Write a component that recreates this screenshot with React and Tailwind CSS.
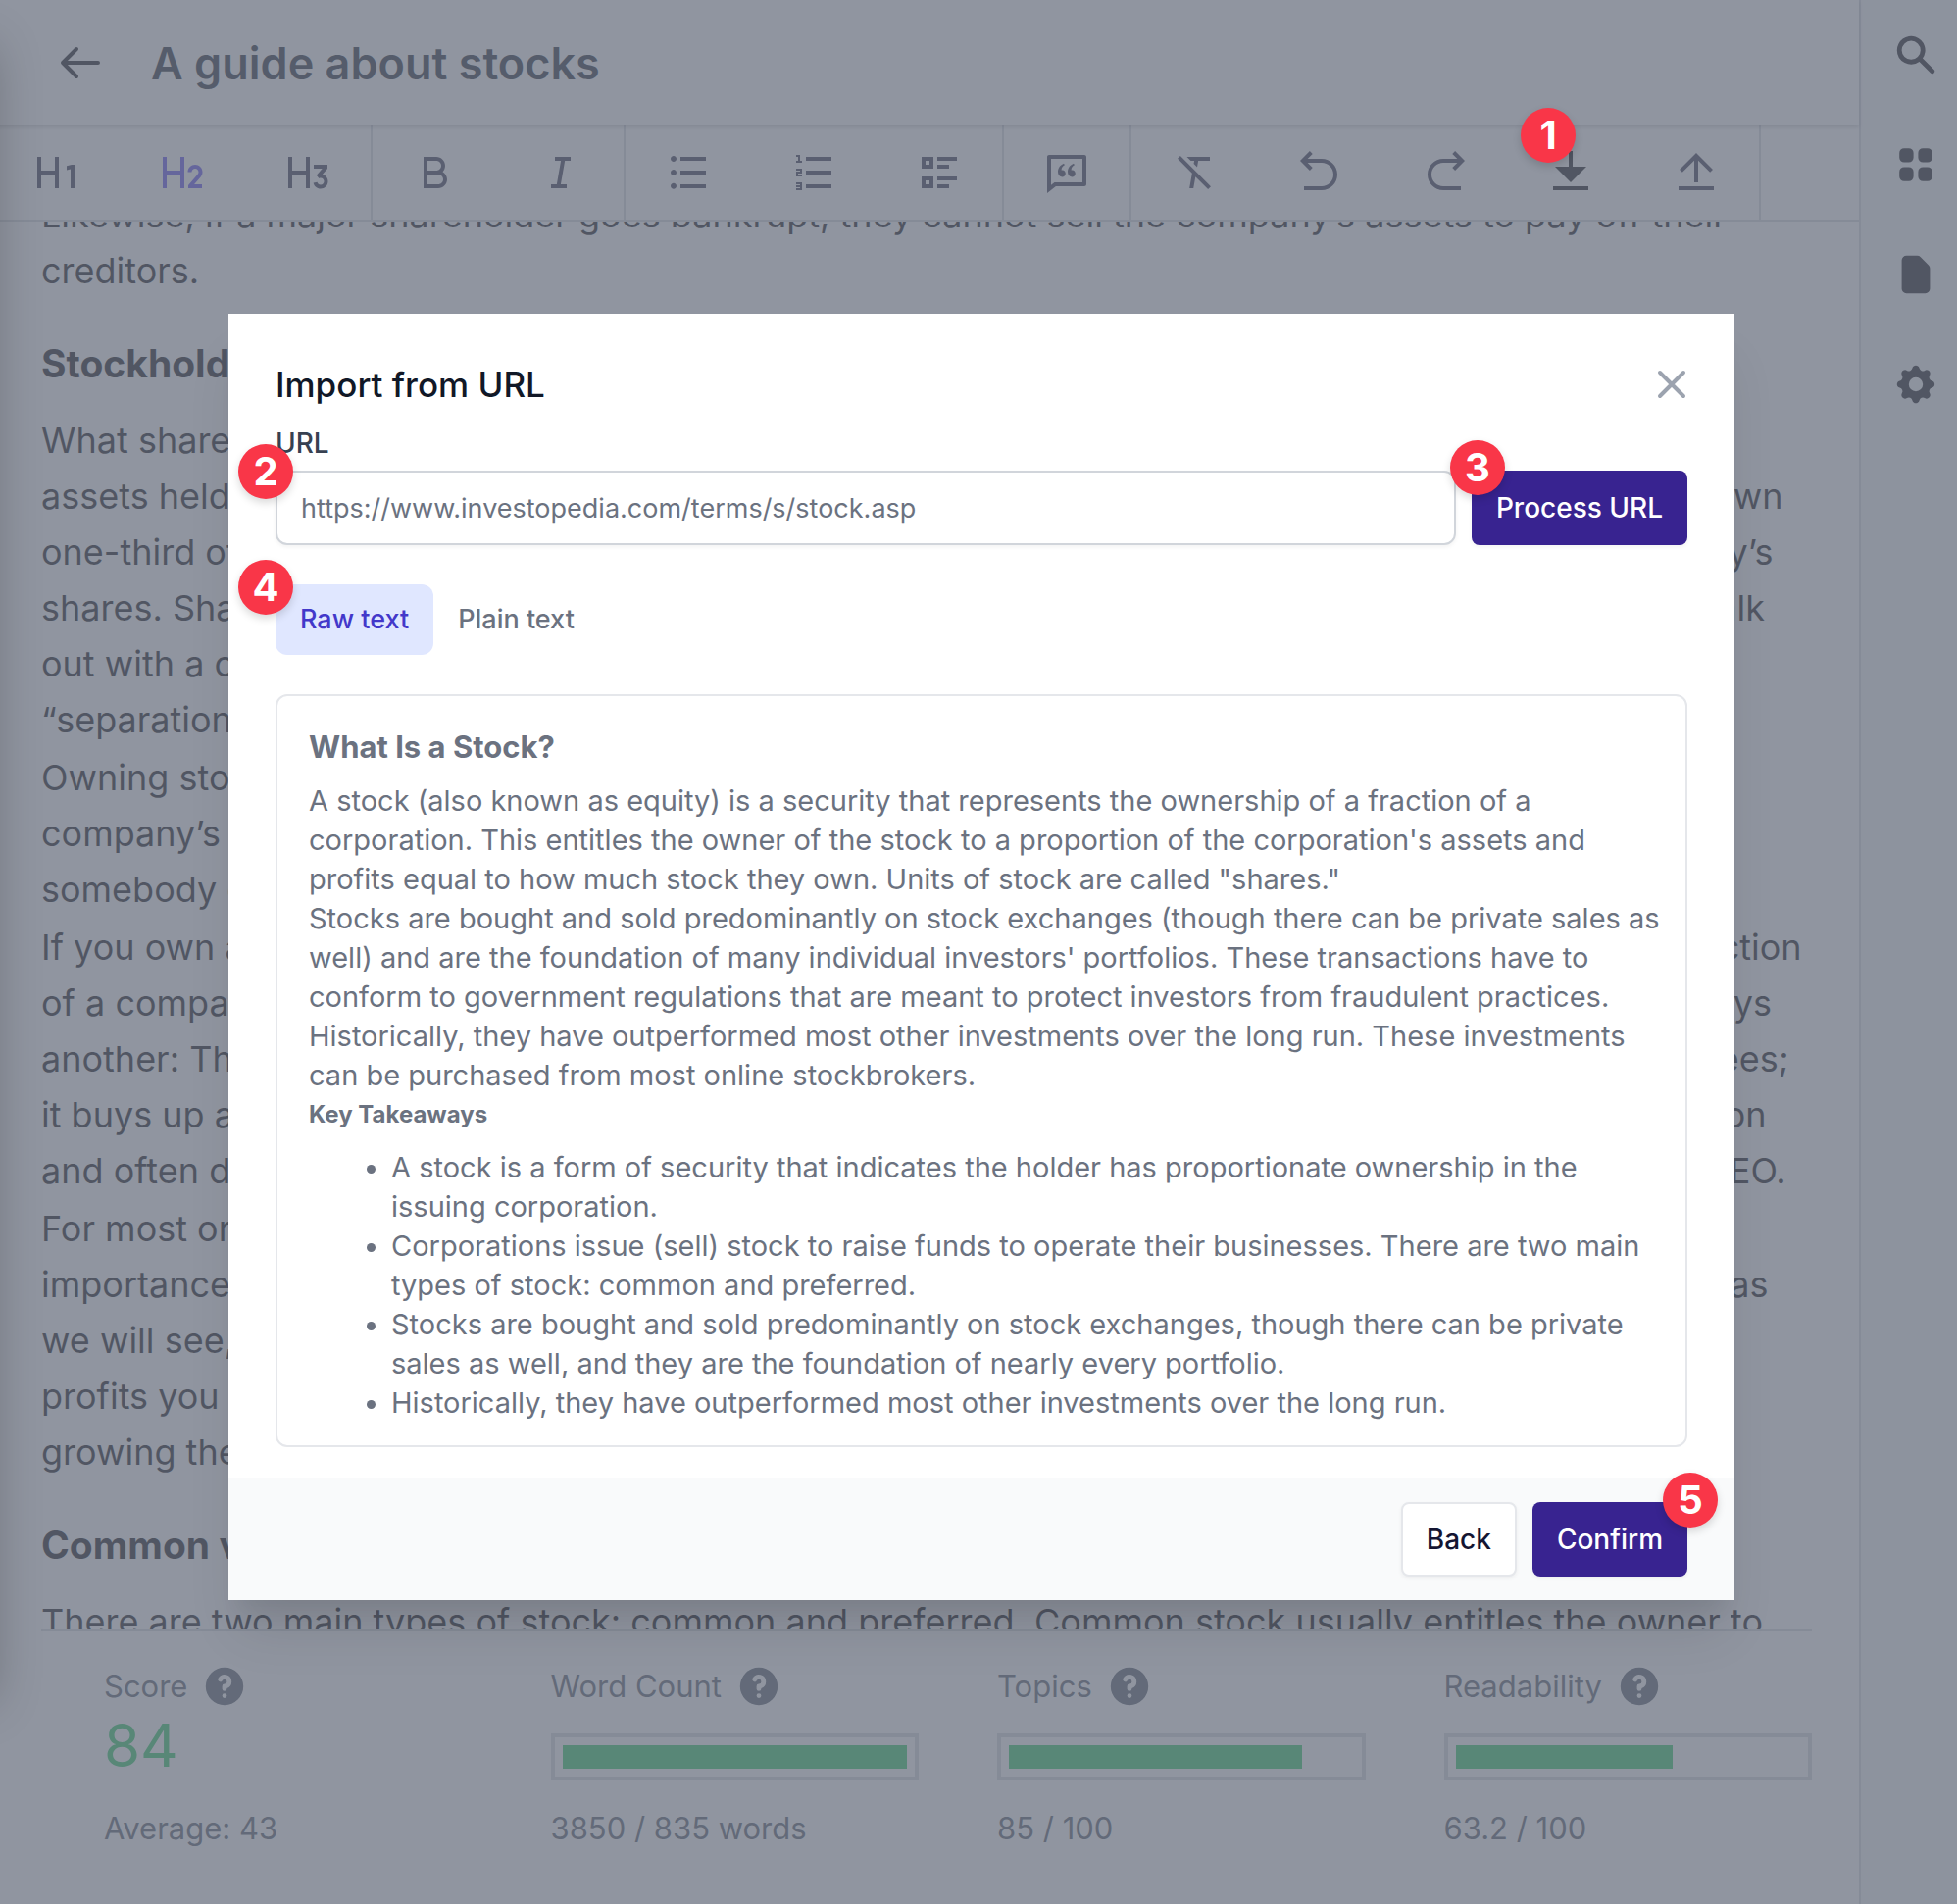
import {
  RiH1, RiH2, RiH3, RiBold, RiItalic, RiListUnordered, RiListOrdered, RiListCheck2,
  RiChatQuoteLine, RiFormatClear, RiArrowGoBackLine, RiArrowGoForwardLine, RiDownloadFill, RiUploadLine,
} from "react-icons/ri";
import {
  HiSearch, HiViewGrid, HiDocument, HiCog, HiQuestionMarkCircle, HiOutlineArrowLeft, HiOutlineX,
} from "react-icons/hi";

const TOOL_GROUPS = [
  [
    { label: "Heading 1", Icon: RiH1 },
    { label: "Heading 2", Icon: RiH2, tone: "text-[#5443f0]" },
    { label: "Heading 3", Icon: RiH3 },
  ],
  [
    { label: "Bold", Icon: RiBold },
    { label: "Italic", Icon: RiItalic },
  ],
  [
    { label: "Bullet list", Icon: RiListUnordered },
    { label: "Numbered list", Icon: RiListOrdered },
    { label: "Check list", Icon: RiListCheck2 },
  ],
  [{ label: "Quote", Icon: RiChatQuoteLine }],
  [
    { label: "Clear formatting", Icon: RiFormatClear },
    { label: "Undo", Icon: RiArrowGoBackLine },
    { label: "Redo", Icon: RiArrowGoForwardLine },
    { label: "Import", Icon: RiDownloadFill, tone: "text-[#05070d]" },
    { label: "Export", Icon: RiUploadLine },
  ],
];

const PARAGRAPHS = [
  [
    "What shareholders actually own are shares issued by the corporation, and the corporation owns the",
    "assets held by a firm. So if you own 33% of the shares of a company it’s incorrect to assert that you own",
    "one-third of the company; it is instead correct to state that you own 100% of one-third of the company’s",
    "shares. Shareholders cannot do as you please with a corporation or its assets. A shareholder can’t walk",
    "out with a chair because the corporation owns that chair, not the shareholder. This is known as the",
    "“separation of ownership and control.”",
  ],
  [
    "Owning stock gives you the right to vote in shareholder meetings, receive dividends (which are the",
    "company’s profits) if and when they are distributed, and it gives you the right to sell your shares to",
    "somebody else.",
  ],
  [
    "If you own a majority of shares, your voting power expands so that you can indirectly control the direction",
    "of a company by appointing its board of directors. This becomes most evident when one company buys",
    "another: The acquiring company doesn’t go round buying up the building, the chairs, and the employees;",
    "it buys up all its shares. The board of directors is responsible for increasing the value of the corporation",
    "and often does so by hiring professional manager, or officer, such as the Chief Executive Officer, or CEO.",
  ],
  [
    "For most ordinary shareholders, not being able to manage the company isn’t such a big deal. The",
    "importance of being a shareholder is that you are entitled to a portion of the company’s profit, which, as",
    "we will see, is the foundation of a stock’s value. The more shares you own, the larger the share of the",
    "profits you get. Many stocks, however, do not pay out dividends and instead reinvest profits back into",
    "growing the company.",
  ],
];

const METRICS = [
  { label: "Score", score: "84", note: "Average: 43" },
  { label: "Word Count", percent: 100, note: "3850 / 835 words" },
  { label: "Topics", percent: 85, note: "85 / 100" },
  { label: "Readability", percent: 63, note: "63.2 / 100" },
];

const SIDE_LINKS = [
  { label: "Search", Icon: HiSearch },
  { label: "Apps", Icon: HiViewGrid },
  { label: "Document", Icon: HiDocument },
  { label: "Settings", Icon: HiCog },
];

function Lines({ lines }) {
  return (
    <p className="mb-0.5 whitespace-nowrap">
      {lines.map((line) => (
        <span key={line} className="block">{line}</span>
      ))}
    </p>
  );
}

function SectionTitle({ children }) {
  return <h2 className="mt-[42px] mb-[26px] text-[39px] leading-[48px] font-bold">{children}</h2>;
}

function Badge({ children, place }) {
  return (
    <span
      className={`absolute z-10 flex size-14 items-center justify-center rounded-full bg-[#f93648] text-[40px] leading-none font-bold text-white shadow-[0_4px_8px_rgba(0,0,0,0.15)] ${place}`}
    >
      {children}
    </span>
  );
}

function Toolbar() {
  return (
    <div role="toolbar" aria-label="Formatting" className="flex shrink-0 border-b-2 border-[#d2d6dc]">
      {TOOL_GROUPS.map((group) => (
        <div key={group[0].label} className="flex border-r-2 border-[#d2d6dc]">
          {group.map(({ label, Icon, tone = "text-[#2a2b45]" }) => (
            <button key={label} type="button" aria-label={label} className={`flex h-24 w-32 items-center justify-center ${tone}`}>
              <Icon className="size-12" />
            </button>
          ))}
        </div>
      ))}
    </div>
  );
}

function Metric({ label, score, percent, note }) {
  return (
    <div>
      <div className="flex h-12 items-center gap-3.5">
        <span>{label}</span>
        <button type="button" aria-label={`About ${label}`}>
          <HiQuestionMarkCircle className="size-12" />
        </button>
      </div>
      <div className="h-24">
        {score ? (
          <div className="text-[60px] leading-[72px] text-[#22c55e]">{score}</div>
        ) : (
          <div className="pt-6">
            <div className="h-12 border-4 border-[#d2d6dc] p-2">
              <div className="h-full bg-[#22c55e]" style={{ width: `${percent}%` }} />
            </div>
          </div>
        )}
      </div>
      <div className="leading-[50px]">{note}</div>
    </div>
  );
}

function Editor() {
  return (
    <div className="flex h-full">
      <main className="-ml-1.5 flex min-w-0 flex-1 flex-col">
        <header className="z-10 flex h-32 shrink-0 items-center gap-12 pl-16 shadow-[0_2px_4px_rgba(0,0,0,0.2)]">
          <button type="button" aria-label="Back to documents" className="text-[#05070d]">
            <HiOutlineArrowLeft className="size-12" />
          </button>
          <h1 className="pt-0.5 text-[45px] leading-[56px] font-semibold text-[#161e2e]">A guide about stocks</h1>
        </header>
        <Toolbar />
        <article className="min-h-0 flex-1 overflow-hidden px-12 text-[36px] leading-[57px] text-[#05070d]">
          <div className="-mt-[35px]">
            <Lines
              lines={[
                "Likewise, if a major shareholder goes bankrupt, they cannot sell the company’s assets to pay off their",
                "creditors.",
              ]}
            />
            <SectionTitle>Stockholders and Equity Ownership</SectionTitle>
            {PARAGRAPHS.map((lines) => (
              <Lines key={lines[0]} lines={lines} />
            ))}
            <SectionTitle>Common vs. Preferred Stock</SectionTitle>
            <Lines
              lines={["There are two main types of stock: common and preferred. Common stock usually entitles the owner to"]}
            />
          </div>
        </article>
        <footer className="mx-12 grid shrink-0 grid-cols-4 gap-20 border-t-2 border-[#d2d6dc] pt-8 pb-[52px] pl-16 text-[31px] text-[#4b5563]">
          {METRICS.map((metric) => (
            <Metric key={metric.label} {...metric} />
          ))}
        </footer>
      </main>
      <nav aria-label="Tools" className="flex w-[100px] shrink-0 flex-col gap-16 border-l-2 border-[#d2d6dc] bg-[#f4f5f7] pt-8 pl-8 text-[#05070d]">
        {SIDE_LINKS.map(({ label, Icon }) => (
          <a key={label} href={`#${label.toLowerCase()}`} aria-label={label}>
            <Icon className="size-12" />
          </a>
        ))}
      </nav>
    </div>
  );
}

function ImportDialog() {
  return (
    <div
      role="dialog"
      aria-labelledby="import-title"
      className="w-full max-w-[1536px] bg-white shadow-[0_40px_50px_-10px_rgba(0,0,0,0.1),0_20px_20px_-10px_rgba(0,0,0,0.06)]"
    >
      <div className="px-12 pt-12 pb-8">
        <div className="flex items-center justify-between">
          <h2 id="import-title" className="text-[35px] leading-[48px] font-medium text-[#111827]">Import from URL</h2>
          <button type="button" aria-label="Close" className="-mr-2 text-[#9ca3af]">
            <HiOutlineX className="size-12" />
          </button>
        </div>

        <label htmlFor="import-url" className="mt-4 block text-[28px] leading-[40px] font-medium text-[#374151]">URL</label>
        <div className="mt-2 flex gap-4">
          <div className="relative flex-1">
            <input
              id="import-url"
              type="text"
              defaultValue="https://www.investopedia.com/terms/s/stock.asp"
              className="h-[76px] w-full rounded-xl border-2 border-[#d1d5db] bg-white px-6 text-[27px] text-[#6b7280] shadow-[0_2px_4px_rgba(0,0,0,0.05)]"
            />
            <Badge place="-left-[38px] -top-[27px]">2</Badge>
          </div>
          <div className="relative">
            <button type="button" className="h-[76px] rounded-lg bg-[#382390] px-[25px] text-[28px] font-medium text-white shadow-[0_2px_4px_rgba(0,0,0,0.05)]">
              Process URL
            </button>
            <Badge place="-left-[22px] -top-[31px]">3</Badge>
          </div>
        </div>

        <div role="tablist" className="mt-10 flex text-[27px] leading-[40px] font-medium">
          <div className="relative">
            <button type="button" role="tab" aria-selected="true" className="rounded-xl bg-[#e0e7ff] px-[25px] py-4 text-[#4338ca]">Raw text</button>
            <Badge place="-left-[38px] -top-[25px]">4</Badge>
          </div>
          <button type="button" role="tab" aria-selected="false" className="px-[25px] py-4 text-[#6b7280]">Plain text</button>
        </div>

        <div className="mt-10 rounded-xl border-2 border-[#e5e7eb] pt-8 pr-6 pb-[23px] pl-8 text-[29px] leading-[40px] text-[#6b7280]">
          <h3 className="mb-[15px] text-[31px] font-bold">What Is a Stock?</h3>
          <p>
            A stock (also known as equity) is a security that represents the ownership of a fraction of a
            corporation. This entitles the owner of the stock to a proportion of the corporation's assets and
            profits equal to how much stock they own. Units of stock are called "shares."
          </p>
          <p>
            Stocks are bought and sold predominantly on stock exchanges (though there can be private sales as
            well) and are the foundation of many individual investors' portfolios. These transactions have to
            conform to government regulations that are meant to protect investors from fraudulent practices.
            Historically, they have outperformed most other investments over the long run. These investments
            can be purchased from most online stockbrokers.
          </p>
          <h4 className="mb-[14px] text-[24px] leading-[40px] font-bold">Key Takeaways</h4>
          <ul className="list-disc pl-[84px]">
            <li>A stock is a form of security that indicates the holder has proportionate ownership in the issuing corporation.</li>
            <li>Corporations issue (sell) stock to raise funds to operate their businesses. There are two main types of stock: common and preferred.</li>
            <li>Stocks are bought and sold predominantly on stock exchanges, though there can be private sales as well, and they are the foundation of nearly every portfolio.</li>
            <li>Historically, they have outperformed most other investments over the long run.</li>
          </ul>
        </div>
      </div>

      <div className="flex justify-end gap-4 bg-[#f9fafb] px-12 py-6 text-[28px] font-medium">
        <button type="button" className="h-[76px] rounded-lg border-2 border-[#e5e7eb] bg-white px-6 text-[#141532] shadow-[0_2px_4px_rgba(0,0,0,0.05)]">Back</button>
        <div className="relative">
          <button type="button" className="h-[76px] rounded-lg bg-[#382390] px-[25px] text-white shadow-[0_2px_4px_rgba(0,0,0,0.05)]">Confirm</button>
          <Badge place="-right-[31px] -top-[30px]">5</Badge>
        </div>
      </div>
    </div>
  );
}

export default function App() {
  return (
    <div className="relative h-screen overflow-hidden bg-white font-['Inter',sans-serif]">
      <Editor />
      <div className="absolute inset-0 z-20 flex items-center justify-center bg-[#6b7280]/75 pt-2.5 pl-1.5">
        <div className="absolute top-0 right-full bottom-60 w-40 shadow-[0_40px_50px_-8px_rgba(0,0,0,0.25)]" />
        <Badge place="top-[110px] right-[389px]">1</Badge>
        <ImportDialog />
      </div>
    </div>
  );
}
